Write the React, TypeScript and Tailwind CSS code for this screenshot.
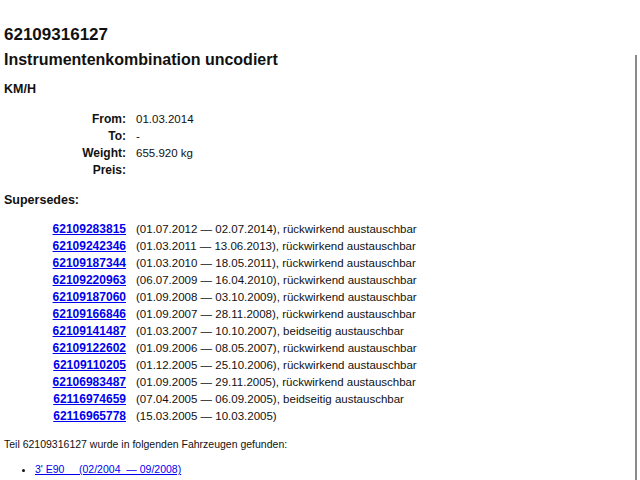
import React from "react";

interface Supersede {
  nr: string;
  from: string;
  to: string;
  note?: string;
}

const supersedes: Supersede[] = [
  { nr: "62109283815", from: "01.07.2012", to: "02.07.2014", note: "rückwirkend austauschbar" },
  { nr: "62109242346", from: "01.03.2011", to: "13.06.2013", note: "rückwirkend austauschbar" },
  { nr: "62109187344", from: "01.03.2010", to: "18.05.2011", note: "rückwirkend austauschbar" },
  { nr: "62109220963", from: "06.07.2009", to: "16.04.2010", note: "rückwirkend austauschbar" },
  { nr: "62109187060", from: "01.09.2008", to: "03.10.2009", note: "rückwirkend austauschbar" },
  { nr: "62109166846", from: "01.09.2007", to: "28.11.2008", note: "rückwirkend austauschbar" },
  { nr: "62109141487", from: "01.03.2007", to: "10.10.2007", note: "beidseitig austauschbar" },
  { nr: "62109122602", from: "01.09.2006", to: "08.05.2007", note: "rückwirkend austauschbar" },
  { nr: "62109110205", from: "01.12.2005", to: "25.10.2006", note: "rückwirkend austauschbar" },
  { nr: "62106983487", from: "01.09.2005", to: "29.11.2005", note: "rückwirkend austauschbar" },
  { nr: "62116974659", from: "07.04.2005", to: "06.09.2005", note: "beidseitig austauschbar" },
  { nr: "62116965778", from: "15.03.2005", to: "10.03.2005" },
];

const details: [string, string][] = [
  ["From:", "01.03.2014"],
  ["To:", "-"],
  ["Weight:", "655.920 kg"],
  ["Preis:", ""],
];

export default function App() {
  return (
    <div className="relative min-h-[480px] bg-white px-[4px] pt-[25px] text-[#111] font-['Liberation_Sans',Arial,sans-serif]">
      <h1 className="text-[17px] font-bold leading-[20px]">62109316127</h1>
      <h2 className="mt-[5px] text-[16px] font-bold leading-[20px]">
        Instrumentenkombination uncodiert
      </h2>
      <h3 className="mt-[11px] text-[12.5px] font-bold leading-[16px]">KM/H</h3>

      <table className="mt-[14px] text-[12px] leading-[17px]">
        <tbody>
          {details.map(([label, value]) => (
            <tr key={label}>
              <td className="w-[132px] pr-[10px] text-right font-bold">{label}</td>
              <td className="text-[11.5px]">{value}</td>
            </tr>
          ))}
        </tbody>
      </table>

      <h3 className="mt-[13px] text-[12.5px] font-bold leading-[16px]">Supersedes:</h3>

      <table className="mt-[13px] text-[12px] leading-[17px]">
        <tbody>
          {supersedes.map((s) => (
            <tr key={s.nr}>
              <td className="w-[132px] pr-[10px] text-right">
                <a href="#" className="font-bold text-[#0000ee] underline">
                  {s.nr}
                </a>
              </td>
              <td className="text-[11.5px]">
                ({s.from} — {s.to}){s.note ? `, ${s.note}` : ""}
              </td>
            </tr>
          ))}
        </tbody>
      </table>

      <p className="mt-[12px] text-[10.5px] leading-[14px]">
        Teil 62109316127 wurde in folgenden Fahrzeugen gefunden:
      </p>
      <ul className="mt-[11px] list-disc pl-[31px] text-[10.5px] leading-[14px]">
        <li>
          <a href="#" className="text-[#0000ee] underline">
            3' E90&nbsp;&nbsp;&nbsp;&nbsp;&nbsp;(02/2004 &nbsp;— 09/2008)
          </a>
        </li>
      </ul>

      <div className="fixed right-[3px] top-[55px] bottom-0 w-[2px] bg-[#8a8a8a]" />
    </div>
  );
}
